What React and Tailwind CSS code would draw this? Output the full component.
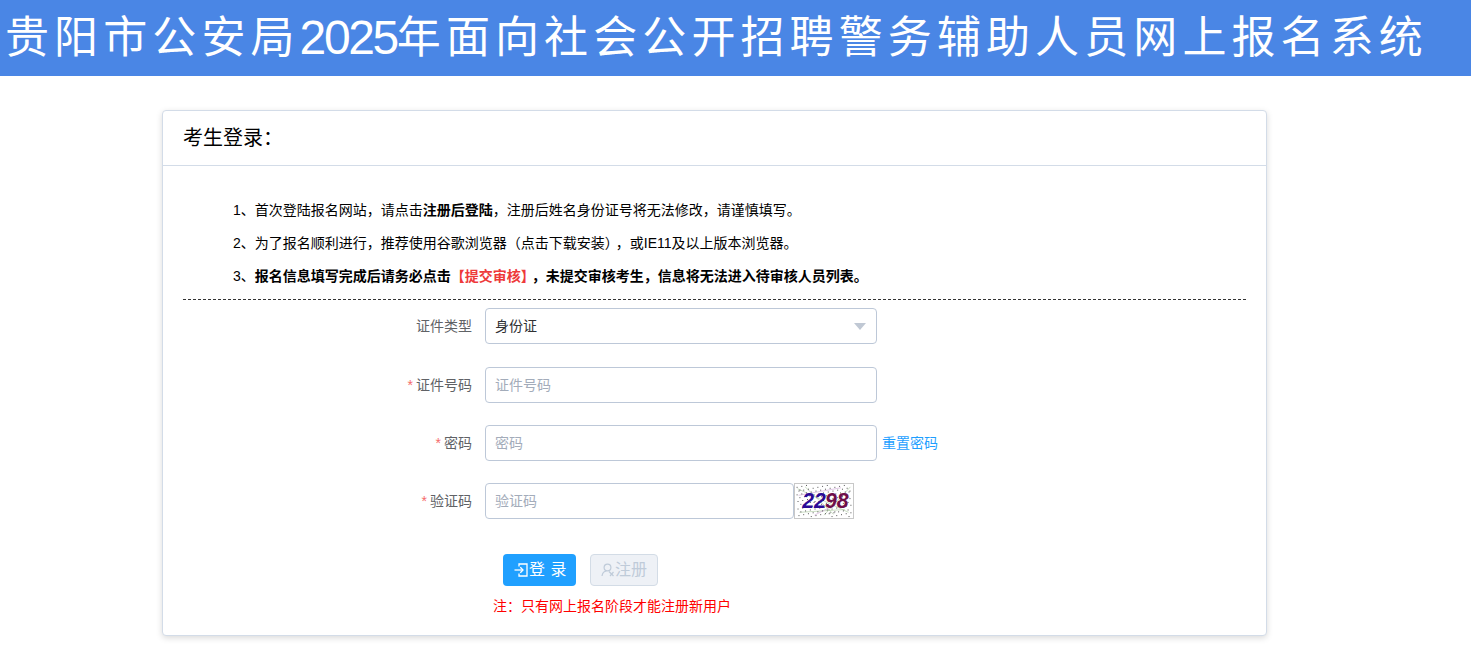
const font = { fontFamily: '"Liberation Sans", "Noto Sans CJK SC", sans-serif' };

// fullwidth punctuation, written as escapes so it survives editing
const COMMA = "\uFF0C";
const COLON = "\uFF1A";
const LP = "\uFF08";
const RP = "\uFF09";

const FormRow = ({ label, required, children, className = "" }) => (
  <div className={`flex items-center ${className}`}>
    <label className="w-[302px] shrink-0 pr-[13px] text-right text-[14px] text-[#606266]">
      {required && <span className="mr-[3px] text-[#f56c6c]">*</span>}
      {label}
    </label>
    {children}
  </div>
);

const TextInput = ({ placeholder, width = "w-[392px]" }) => (
  <input
    placeholder={placeholder}
    className={`h-[36px] ${width} shrink-0 rounded-[4px] border border-[#bdc8d8] bg-white px-[9px] text-[14px] text-[#303133] outline-none placeholder:text-[#a3acba]`}
  />
);

// speckle for the captcha, stepped so it stays the same on every render
const speckle = Array.from({ length: 110 }, (_, i) => [(i * 37 + 3) % 58 + 1, (i * 23 + 5) % 34 + 1]);

const Captcha = () => (
  <svg width="60" height="36" viewBox="0 0 60 36" className="shrink-0 border border-[#c8c8c8] bg-white">
    <g stroke="#b9d0ae" strokeWidth="0.8" fill="none">
      <path d="M2 5 L56 30" />
      <path d="M10 3 L40 32" />
      <path d="M58 3 L30 33" />
      <path d="M4 30 L52 27" />
    </g>
    <g stroke="#d6b6dc" strokeWidth="0.8" fill="none">
      <path d="M3 12 L48 4" />
      <path d="M20 33 L57 14" />
    </g>
    <g fill="#444">
      {speckle.map(([x, y]) => (
        <rect key={`${x}-${y}`} x={x} y={y} width="1" height="1" />
      ))}
    </g>
    <text x="7" y="25" fontFamily="Liberation Sans" fontSize="22.5" fontWeight="700" fontStyle="italic" fill="#2a0a96">22</text>
    <text x="31" y="25" fontFamily="Liberation Sans" fontSize="22.5" fontWeight="700" fontStyle="italic" fill="#6e0f4a">98</text>
  </svg>
);

const LoginIcon = () => (
  <svg width="14" height="14" viewBox="0 0 14 14" fill="none" stroke="currentColor" strokeWidth="1.3" className="shrink-0">
    <path d="M5 3.5 V1 H13 V13 H5 V10.5" />
    <path d="M0.5 7 H9" />
    <path d="M6.3 4.3 L9 7 L6.3 9.7" />
  </svg>
);

const RegisterIcon = () => (
  <svg width="14" height="14" viewBox="0 0 14 14" fill="none" stroke="currentColor" strokeWidth="1.2" className="shrink-0">
    <circle cx="6.5" cy="4.5" r="3.4" />
    <path d="M1 13 C1.5 9.5 3.5 8.2 5.5 8" />
    <path d="M8 8.5 L12.5 13" />
    <path d="M12.5 9 L9 13" />
  </svg>
);

export default function App() {
  return (
    <div className="min-h-[667px] bg-white pb-[30px]" style={font}>
      {/* Banner */}
      <div className="flex h-[76px] items-center overflow-hidden whitespace-nowrap bg-[#4a86e5] pl-[5px] text-[44px] leading-none text-white">
        <span className="tracking-[5.1px]">贵阳市公安局</span>
        <span className="text-[48px] tracking-[-2.4px]">2025</span>
        <span className="tracking-[5.1px]">年面向社会公开招聘警务辅助人员网上报名系统</span>
      </div>

      {/* Card */}
      <div className="ml-[162px] mt-[34px] w-[1105px] rounded-[4px] border border-[#d3dce8] bg-white text-black shadow-[0_2px_6px_rgba(0,0,0,0.15)]">
        <div className="flex h-[55px] items-center border-b border-[#d3dce8] px-[20px] text-[20px]">考生登录{COLON}</div>

        <div className="px-[20px] pt-[28px]">
          <div className="border-b border-dashed border-[#333] pb-[6px] pl-[50px] text-[14px] leading-[33px]">
            <p>
              1、首次登陆报名网站{COMMA}请点击<b>注册后登陆</b>{COMMA}注册后姓名身份证号将无法修改{COMMA}请谨慎填写。
            </p>
            <p>2、为了报名顺利进行{COMMA}推荐使用谷歌浏览器{LP}点击下载安装{RP}<span className="ml-[4px]">{COMMA}</span>或IE11及以上版本浏览器。</p>
            <p>
              3、<b>报名信息填写完成后请务必点击<span className="text-[#ee3a3a]">【提交审核】</span><span className="ml-[4px]">{COMMA}</span>未提交审核考生{COMMA}信息将无法进入待审核人员列表。</b>
            </p>
          </div>

          <form className="pt-[8px]">
            <FormRow label="证件类型">
              <div className="flex h-[36px] w-[392px] shrink-0 items-center justify-between rounded-[4px] border border-[#bdc8d8] bg-white pl-[9px] pr-[10px] text-[14px] text-[#303133]">
                <span className="pt-px">身份证</span>
                <span className="h-0 w-0 border-x-[6px] border-t-[7px] border-x-transparent border-t-[#c0c8d4]" />
              </div>
            </FormRow>
            <FormRow label="证件号码" required className="mt-[23px]">
              <TextInput placeholder="证件号码" />
            </FormRow>
            <FormRow label="密码" required className="mt-[22px]">
              <TextInput placeholder="密码" />
              <a className="ml-[5px] text-[14px] text-[#1f9fff]">重置密码</a>
            </FormRow>
            <FormRow label="验证码" required className="mt-[22px]">
              <TextInput placeholder="验证码" width="w-[309px]" />
              <Captcha />
            </FormRow>

            <div className="mt-[35px] flex pl-[320px]">
              <button type="button" className="flex h-[32px] w-[73px] items-center justify-center rounded-[4px] bg-[#20a0ff] pl-[2px] text-[16px] text-white">
                <LoginIcon />
                <span className="ml-[1px] tracking-[0.5px]">登 录</span>
              </button>
              <button type="button" className="ml-[14px] flex h-[32px] w-[68px] items-center justify-center rounded-[4px] border border-[#d3dce6] bg-[#eef1f6] text-[16px] text-[#bfcbd9]">
                <RegisterIcon />
                <span>注册</span>
              </button>
            </div>
            <p className="mt-[12px] pl-[310px] pb-[21px] text-[14px] leading-[16px] text-[#ff0000]">注{COLON}只有网上报名阶段才能注册新用户</p>
          </form>
        </div>
      </div>
    </div>
  );
}
